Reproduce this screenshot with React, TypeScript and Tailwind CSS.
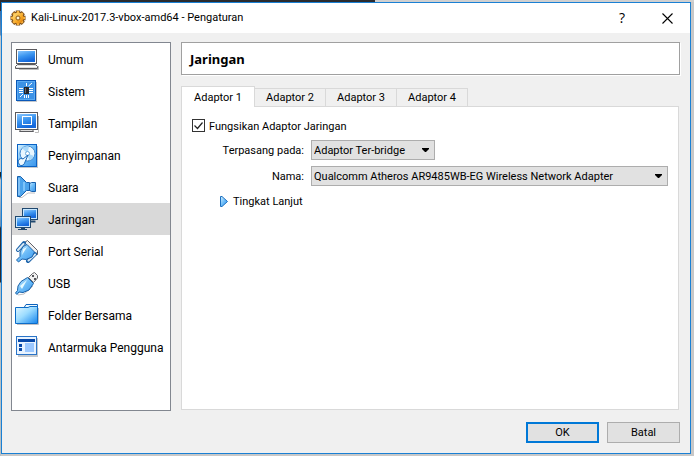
import React, { useState } from "react";

const Defs = () => (
  <svg width="0" height="0" className="absolute" aria-hidden="true">
    <defs>
      <linearGradient id="screen" x1="0" y1="0" x2="0.4" y2="1">
        <stop offset="0" stopColor="#8cc8ff" />
        <stop offset="0.5" stopColor="#3c96f0" />
        <stop offset="1" stopColor="#1468dc" />
      </linearGradient>
      <linearGradient id="pale" x1="0" y1="0" x2="1" y2="1">
        <stop offset="0" stopColor="#d8f2ff" />
        <stop offset="0.5" stopColor="#6cbcf8" />
        <stop offset="1" stopColor="#3a94ea" />
      </linearGradient>
      <linearGradient id="folder" x1="0" y1="0" x2="1" y2="1">
        <stop offset="0" stopColor="#e4f8ff" />
        <stop offset="0.45" stopColor="#9cdcff" />
        <stop offset="1" stopColor="#1484ee" />
      </linearGradient>
      <linearGradient id="gold" x1="0" y1="0" x2="1" y2="1">
        <stop offset="0" stopColor="#ffe68a" />
        <stop offset="0.6" stopColor="#f8a824" />
        <stop offset="1" stopColor="#d87408" />
      </linearGradient>
    </defs>
  </svg>
);

const icons = {
  general: (
    <>
      <path d="M4 21.500H23.500V18" fill="none" stroke="#bbb" />
      <rect x="1.500" y="1.500" width="20" height="14" fill="#fff" stroke="#5a5a5e" />
      <rect x="3" y="3" width="17" height="11" fill="url(#screen)" />
      <path d="M2.500 16.500H20.500L22.500 18.500V20.500H0.500V18.500Z" fill="#e0e0e0" stroke="#5a5a5e" />
      <path d="M1 18.500H22" stroke="#fff" />
    </>
  ),
  system: (
    <>
      <rect x="2" y="2" width="20" height="20" fill="#c4c8cc" />
      <rect x="1.500" y="0.500" width="19" height="20" fill="#5aaaf2" stroke="#0a58b8" />
      <rect x="3" y="2" width="16" height="17" fill="#3c92e6" />
      <path d="M4 8.500H8M4 10.500H8M4 12.500H8M14 8.500H18M14 10.500H18M14 12.500H18M9.500 15V18M11.500 15V18M13.500 15V18M11.500 3V6M13.500 6L17 3M5 17L8 14" stroke="#fff" />
      <rect x="9" y="7" width="5" height="7" fill="#26262a" />
      <path d="M10.500 8V13" stroke="#66666c" />
    </>
  ),
  display: (
    <>
      <path d="M20 20.500H23.500V4" fill="none" stroke="#bbb" />
      <rect x="0.500" y="0.500" width="22" height="17" fill="#fff" stroke="#5a5a5e" />
      <rect x="2" y="2" width="19" height="14" fill="url(#screen)" />
      <rect x="7.500" y="4.500" width="9" height="8" fill="none" stroke="#fff" />
      <path d="M5.500 17.500H17.500L18.500 19.500H4.500Z" fill="#ddd" stroke="#5a5a5e" />
    </>
  ),
  storage: (
    <>
      <rect x="3" y="2" width="20" height="22" fill="#c4c8cc" />
      <rect x="2.500" y="0.500" width="19" height="22" fill="url(#pale)" stroke="#0a62c4" />
      <circle cx="12.500" cy="9.500" r="7.500" fill="#e8f6ff" stroke="#3c84cc" />
      <path d="M12.500 9.500L7 4Q10 1.500 14 2.500ZM12.500 9.500L19 12Q17 16 14 16.500Z" fill="#a8d8fa" />
      <circle cx="12.500" cy="9.500" r="2" fill="#fff" stroke="#6aa8dc" />
      <path d="M4 20C2 16 5 13.500 8 15L13 11L10 18C9 22 5 22.500 4 20Z" fill="#eef9ff" stroke="#1866b8" />
    </>
  ),
  audio: (
    <>
      <path d="M4 21.500H7L13 17H20" fill="none" stroke="#c0c0c4" />
      <path d="M13 8.500L16.500 6.500H20.500V15.500H16.500L13 13.500Z" fill="url(#pale)" stroke="#1760ac" />
      <path d="M2.500 0.500H5.500L11.500 6.500H14.500V14.500H11.500L5.500 20.500H2.500Z" fill="#4ca4ec" stroke="#1760ac" />
      <path d="M4 2V19" stroke="#b0dcff" />
      <path d="M9 6V15" stroke="#7cc4fa" strokeWidth="2" />
    </>
  ),
  network: (
    <>
      <path d="M10 13.500H20.500" stroke="#20486e" strokeWidth="2" />
      <rect x="7.500" y="0.500" width="15" height="11" fill="#c8e8ff" stroke="#20486e" />
      <rect x="9" y="2" width="12" height="8" fill="url(#screen)" />
      <rect x="0.500" y="8.500" width="15" height="11" fill="#c8e8ff" stroke="#20486e" />
      <rect x="2" y="10" width="12" height="8" fill="url(#screen)" />
      <path d="M3 21.500H12M6 20.500H10" stroke="#20486e" />
    </>
  ),
  serial: (
    <>
      <path d="M9.500 2.500L12.500 0.500L22.500 10.500V14.500L19.500 15Z" fill="#f0f0f0" stroke="#606068" />
      <path d="M3 10L9 3M13 21L20 14" stroke="#1a62aa" strokeWidth="4" strokeLinecap="round" />
      <path d="M3 10L8.500 4M13.500 20.500L20 14.500" stroke="#d8e8f4" strokeWidth="2" strokeLinecap="round" />
      <path d="M8 6.500L12 4.500L19.500 12L17 17L11 19.500L7 19L3.500 22L1.500 20L5 16.500L5 12Z" fill="url(#pale)" stroke="#1a62aa" />
      <path d="M8 9L12 7L7 15Z" fill="#e8faff" />
    </>
  ),
  usb: (
    <>
      <path d="M13.500 5.500L17.500 1.500L19.500 0.500L22.500 3.500V6L18.500 10.500Z" fill="#f0f0f0" stroke="#66666a" />
      <path d="M17 3H19V5H17ZM19 6H21V8H19Z" fill="#55555a" />
      <path d="M3 23L9 22L18 14" stroke="#c0c0c4" fill="none" />
      <path d="M12.500 5.500L18.500 11.500L14 18L8 20.500L4 20L2 22.500L0.500 21L2.500 18.500L3 14L6 9.500Z" fill="url(#pale)" stroke="#1560a8" />
      <path d="M5 14L12 8L7 17Z" fill="#e6faff" />
    </>
  ),
  folder: (
    <>
      <path d="M2 20.500H23.500V4" fill="none" stroke="#c0c0c4" />
      <path d="M8.500 4.500L11 0.500H22.500V18H8.500Z" fill="#eefaff" stroke="#0c62bc" />
      <path d="M0.500 3.500H13L15 2.500H22.500V19.500H0.500Z" fill="url(#folder)" stroke="#0c6cc8" />
    </>
  ),
  panels: (
    <>
      <rect x="3" y="2" width="20" height="19" fill="#c4c8cc" />
      <rect x="1.500" y="0.500" width="20" height="18" fill="#e8f3ff" stroke="#2a74c8" />
      <rect x="3" y="3" width="17" height="3" fill="#0848a8" />
      <rect x="4" y="8" width="3" height="3" fill="#0848a8" />
      <rect x="4" y="12" width="3" height="3" fill="#0848a8" />
      <rect x="10" y="7" width="9" height="9" fill="#9cc8ff" />
    </>
  ),
};

const sections: { label: string; icon: keyof typeof icons }[] = [
  { label: "Umum", icon: "general" },
  { label: "Sistem", icon: "system" },
  { label: "Tampilan", icon: "display" },
  { label: "Penyimpanan", icon: "storage" },
  { label: "Suara", icon: "audio" },
  { label: "Jaringan", icon: "network" },
  { label: "Port Serial", icon: "serial" },
  { label: "USB", icon: "usb" },
  { label: "Folder Bersama", icon: "folder" },
  { label: "Antarmuka Pengguna", icon: "panels" },
];

const tabs = ["Adaptor 1", "Adaptor 2", "Adaptor 3", "Adaptor 4"];

function Gear() {
  return (
    <svg className="size-4" viewBox="0 0 16 16" aria-hidden="true">
      <path d="M8 0.500V15.500M0.500 8H15.500M2.700 2.700L13.300 13.300M13.300 2.700L2.700 13.300" stroke="#7a4c18" strokeWidth="4.500" />
      <circle cx="8" cy="8" r="6.500" fill="#7a4c18" />
      <path d="M8 1V15M1 8H15M3.200 3.200L12.800 12.800M12.800 3.200L3.200 12.800" stroke="#f8b440" strokeWidth="2.500" />
      <circle cx="8" cy="8" r="5.500" fill="url(#gold)" />
      <circle cx="8" cy="8" r="2" fill="#fff4d0" stroke="#8a5818" />
    </svg>
  );
}

function Combo({ id, value, width }: { id: string; value: string; width: string }) {
  return (
    <div className={`grid items-center ${width}`}>
      <select
        id={id}
        defaultValue={value}
        className="col-start-1 row-start-1 h-5 w-full appearance-none border border-[#adadad] bg-[#e1e1e1] pt-[2px] pr-5 pl-[2px] leading-4"
      >
        <option>{value}</option>
      </select>
      <svg className="pointer-events-none col-start-1 row-start-1 mr-[6px] h-1 w-[7px] justify-self-end" viewBox="0 0 7 4" aria-hidden="true">
        <path d="M0 0H7V1L4 4H3L0 1Z" />
      </svg>
    </div>
  );
}

export default function App() {
  const [section, setSection] = useState("Jaringan");
  const [tab, setTab] = useState(0);
  const [enabled, setEnabled] = useState(true);

  return (
    <div className="flex min-h-screen flex-col bg-[#c8c8c8] bg-[linear-gradient(90deg,#2b2b2f_54%,#d0d0d0_54%),linear-gradient(180deg,#2b2b2f_11px,#3a6ea8_11px,#6a8cb0_35px,#c4c8cc_36px,#c4c8cc_172px,#222_172px,#222_176px,#c4c8cc_180px,#6890b8_226px,#2b2b2f_228px,#2b2b2f_282px,#b8c0c4_283px)] bg-[length:100%_2px,1px_100%] bg-no-repeat pt-[2px] pr-[3px] pb-[2px] pl-px font-[Roboto,sans-serif] text-[11px] leading-4 text-black">
      <Defs />
      <div className="flex flex-1 flex-col border border-[#1a80d4] bg-[#f0f0f0]">
        <header className="flex h-[30px] items-center bg-white pr-[15px] pl-2">
          <Gear />
          <h1 className="ml-[5px] flex-1">Kali-Linux-2017.3-vbox-amd64 - Pengaturan</h1>
          <button aria-label="Bantuan" className="w-4 font-['Open_Sans',sans-serif] text-[14px] leading-4">?</button>
          <button aria-label="Tutup" className="ml-[29px] flex w-4 justify-center">
            <svg className="size-[11px]" viewBox="0 0 11 11" aria-hidden="true">
              <path d="M0.500 0.500L10.500 10.500M10.500 0.500L0.500 10.500" stroke="#000" strokeWidth="1.100" />
            </svg>
          </button>
        </header>

        <div className="flex flex-1 gap-[10px] pt-[9px] pr-[10px] pb-[10px] pl-[9px]">
          <nav className="mb-8 w-40 shrink-0 border border-[#828790] bg-white">
            {sections.map((s) => (
              <button
                key={s.label}
                onClick={() => setSection(s.label)}
                className={`flex h-8 w-full items-center gap-[9px] pt-[2px] pl-[3px] text-left text-[12px] leading-5 whitespace-nowrap ${s.label === section ? "bg-[#d9d9d9]" : ""}`}
              >
                <svg className="size-6 shrink-0" viewBox="0 0 24 24" aria-hidden="true">{icons[s.icon]}</svg>
                {s.label}
              </button>
            ))}
          </nav>

          <main className="flex min-w-0 flex-1 flex-col">
            <h2 className="flex h-[33px] items-center border border-[#a0a0a0] bg-white pt-px pl-2 font-['Noto_Sans',sans-serif] text-[13px] leading-5 font-bold shadow-[1px_1px_0_#fff]">{section}</h2>

            <div role="tablist" className="mt-[11px] flex h-5 items-end">
              {tabs.map((t, i) => (
                <button
                  key={t}
                  role="tab"
                  aria-selected={i === tab}
                  onClick={() => setTab(i)}
                  className={
                    i === tab
                      ? "z-10 -mr-px -mb-px h-[21px] w-[74px] border border-b-0 border-[#d9d9d9] bg-white pt-px"
                      : "-mr-px h-[18px] w-[72px] border border-b-0 border-[#d9d9d9] bg-[#f0f0f0] pt-px"
                  }
                >
                  {t}
                </button>
              ))}
            </div>

            <section className="mr-px flex-1 border border-[#d9d9d9] bg-white px-[10px] pt-3">
              <label className="flex h-[13px] items-center gap-1">
                <span className="grid size-[13px]">
                  <input
                    type="checkbox"
                    checked={enabled}
                    onChange={(e) => setEnabled(e.target.checked)}
                    className="col-start-1 row-start-1 size-[13px] appearance-none border border-[#333] bg-white"
                  />
                  {enabled && (
                    <svg className="pointer-events-none col-start-1 row-start-1 size-[13px]" viewBox="0 0 13 13" aria-hidden="true">
                      <path d="M2.500 6.500L5.500 9.500L10.500 3.500" fill="none" stroke="#222" strokeWidth="1.200" />
                    </svg>
                  )}
                </span>
                <span className="pt-[2px]">Fungsikan Adaptor Jaringan</span>
              </label>
              <div className="mt-2 grid grid-cols-[112px_1fr] items-center gap-x-[7px] gap-y-[6px]">
                <label htmlFor="attached" className="pt-[2px] text-right">Terpasang pada:</label>
                <Combo id="attached" value="Adaptor Ter-bridge" width="w-[124px]" />
                <label htmlFor="name" className="pt-[2px] text-right">Nama:</label>
                <Combo id="name" value="Qualcomm Atheros AR9485WB-EG Wireless Network Adapter" width="w-full" />
              </div>
              <button className="mt-[7px] ml-7 flex h-4 items-center gap-[5px]">
                <svg className="h-[11px] w-2" viewBox="0 0 8 11" aria-hidden="true">
                  <path d="M0.500 0.500H2L7.500 5.500L2 10.500H0.500Z" fill="url(#pale)" stroke="#1c70c0" />
                </svg>
                <span className="pt-px">Tingkat Lanjut</span>
              </button>
            </section>

            <footer className="mt-3 flex justify-end gap-2">
              <button className="h-[21px] w-[73px] border-2 border-[#0078d7] bg-[#e1e1e1] pt-px">OK</button>
              <button className="h-[21px] w-[73px] border border-[#adadad] bg-[#e1e1e1] pt-px">Batal</button>
            </footer>
          </main>
        </div>
      </div>
    </div>
  );
}
